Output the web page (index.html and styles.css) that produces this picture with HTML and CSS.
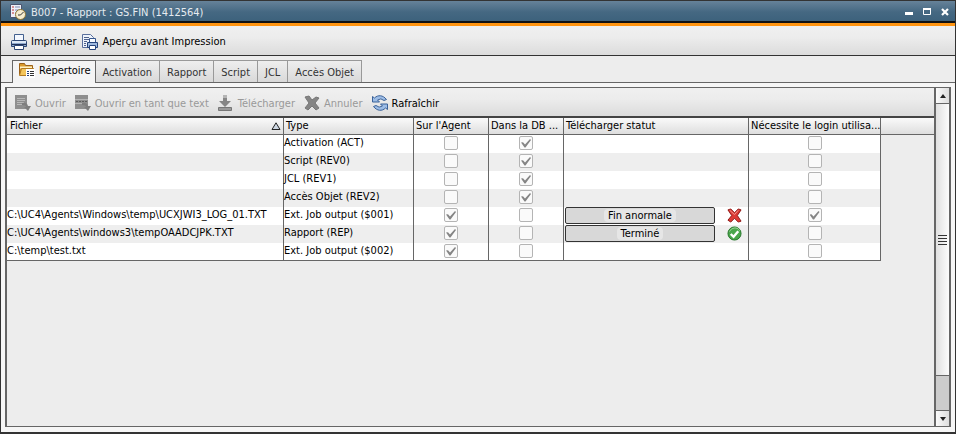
FILE: index.html
```html
<!DOCTYPE html>
<html lang="fr">
  <head>
    <meta charset="UTF-8" />
    <meta name="viewport" content="width=device-width, initial-scale=1.0" />
    <title>B007 - Rapport : GS.FIN (1412564)</title>
    <link rel="stylesheet" href="styles.css">
  </head>
  <body>
    <div class="window">
      <header class="titlebar">
        <svg class="icon" viewBox="0 0 16 16">
          <path d="M.5.5h11v13H.5z" fill="#eef0f8" stroke="#4a5570" />
          <path d="M2 3h2M2 6h2M2 9h2" stroke="#c03030" />
          <path d="M5 3h5M5 6h4M5 9h2" stroke="#7c88b0" />
          <circle cx="10.5" cy="10.5" r="5" fill="#f6edcf" stroke="#8b7434" />
          <path d="M10.5 11l3-3M10.5 11H8" stroke="#333" fill="none" />
        </svg>
        <h1>B007 - Rapport : GS.FIN (1412564)</h1>
        <div class="window-buttons">
          <button aria-label="Réduire"><svg viewBox="0 0 8 8"><path d="M0 4h8v3H0z" fill="#fff" /></svg></button>
          <button aria-label="Agrandir"><svg viewBox="0 0 8 8"><path d="M.5 1v5.5h7V1" fill="none" stroke="#fff" /><path d="M0 0h8v2H0z" fill="#fff" /></svg></button>
          <button aria-label="Fermer"><svg viewBox="0 0 8 8"><path d="M1 1l6 6M7 1L1 7" stroke="#fff" stroke-width="2.2" /></svg></button>
        </div>
      </header>

      <div class="toolbar main-toolbar">
        <button>
          <svg class="icon" viewBox="0 0 16 16">
            <path d="M3.500 7V.5h9V7" fill="#f4f8ff" stroke="#44618f" />
            <path d="M.5 7.500q0-1 1-1h13q1 0 1 1v5H.5z" fill="#8fa9cd" stroke="#2c4674" />
            <path d="M1 8h14" stroke="#dce8f6" stroke-width="2" />
            <path d="M1 10.500h14" stroke="#1f3158" />
            <path d="M3.500 11.500h9v4h-9z" fill="#fff" stroke="#2c4674" />
          </svg>
          Imprimer
        </button>
        <button>
          <svg class="icon" viewBox="0 0 16 16">
            <path d="M.5.5h8l3 3v10H.5z" fill="#eef3fb" stroke="#5a6f9c" />
            <path d="M2 3.500h5M2 5.500h5M2 7.500h3M2 9.500h2M2 11.500h2" stroke="#4f618c" />
            <path d="M7.500 9V4.500h6V9" fill="#f8fbff" stroke="#35558d" />
            <path d="M5.500 8.500h10v5h-10z" fill="#9fb9de" stroke="#25437a" />
            <path d="M7.500 11.500h6v4h-6z" fill="#fff" stroke="#25437a" />
          </svg>
          Aperçu avant Impression
        </button>
      </div>

      <nav class="tabs" role="tablist">
        <button class="tab active" role="tab" aria-selected="true">
          <svg class="icon" viewBox="0 0 16 16">
            <path d="M.5 12.500v-11h5l1 2h7v9z" fill="#d99a2b" stroke="#99601a" />
            <path d="M1 4.500h12v2H1z" fill="#fff3c4" />
            <path d="M.5 13.500l2-7h12l-1 7z" fill="#f3c55c" stroke="#b27a21" />
            <path d="M7 7h9v9H7z" fill="#fff" />
            <path d="M8 9.500h2M8 11.500h2M8 13.500h2" stroke="#263f78" />
            <path d="M11 9.500h4M11 11.500h4M11 13.500h4" stroke="#333" />
          </svg>
          Répertoire
        </button>
        <button class="tab" role="tab">Activation</button>
        <button class="tab" role="tab">Rapport</button>
        <button class="tab" role="tab">Script</button>
        <button class="tab" role="tab">JCL</button>
        <button class="tab" role="tab">Accès Objet</button>
      </nav>

      <main class="pane">
        <div class="panel">
          <div class="content">
            <div class="toolbar file-toolbar">
              <button disabled>
                <svg class="icon" viewBox="0 0 16 16">
                  <path d="M0 0h12v14H0z" fill="#8e8e8e" />
                  <path d="M2 3.500h8M2 5.500h8M2 7.500h7M2 9.500h5" stroke="#b8b8b8" />
                  <path d="M7 8q5-1 6 3h3l-3 5-4-4h2q0-2-4-2z" fill="#7e7e7e" />
                </svg>
                Ouvrir
              </button>
              <button disabled>
                <svg class="icon" viewBox="0 0 16 16">
                  <path d="M0 0h13v14H0z" fill="#8e8e8e" />
                  <path d="M0 4.500h13" stroke="#b4b4b4" />
                  <path d="M1 6.500h11" stroke="#5d5d5d" stroke-dasharray="2 1" />
                  <path d="M0 8.500h9" stroke="#b4b4b4" />
                  <path d="M7 8q5-1 6 3h3l-3 5-4-4h2q0-2-4-2z" fill="#7e7e7e" />
                </svg>
                Ouvrir en tant que text
              </button>
              <button disabled>
                <svg class="icon" viewBox="0 0 16 16">
                  <path d="M5 0h4v6h4l-6 6-6-6h4z" fill="#868686" />
                  <path d="M5 0h4v3H5z" fill="#b5b5b5" />
                  <path d="M.5 12.500h13v3H.5z" fill="#999" stroke="#777" />
                </svg>
                Télécharger
              </button>
              <button disabled>
                <svg class="icon" viewBox="0 0 16 16">
                  <path d="M1 2l4-1 3 4 4-3 3 1-4 5 4 5-3 2-4-4-4 4-3-2 4-5z" fill="#858585" stroke="#777" />
                </svg>
                Annuler
              </button>
              <button>
                <svg class="icon" viewBox="0 0 16 16">
                  <path d="M.5 1.500l2 1.500C6-.5 11 0 14.500 4.500l-2.500 1Q9 2.500 5.500 5l2 2h-7z" fill="#9dbde6" stroke="#3b6299" />
                  <path d="M15.500 14.500l-2-1.500C10 16.500 5 16 1.500 11.500l2.500-1q3 3 6.500.5l-2-2h7z" fill="#9dbde6" stroke="#3b6299" />
                </svg>
                Rafraîchir
              </button>
            </div>

            <table class="files">
              <colgroup>
                <col class="col-file">
                <col class="col-type">
                <col class="col-flag">
                <col class="col-flag">
                <col class="col-status">
                <col class="col-login">
                <col>
              </colgroup>
              <thead>
                <tr>
                  <th>
                    <div class="sorted">
                      Fichier
                      <svg class="sort" viewBox="0 0 10 8"><path d="M5 .8L9 7.500H1z" fill="#ccd6e2" stroke="#222" /></svg>
                    </div>
                  </th>
                  <th>Type</th>
                  <th>Sur l'Agent</th>
                  <th>Dans la DB ...</th>
                  <th>Télécharger statut</th>
                  <th>Nécessite le login utilisa...</th>
                  <th></th>
                </tr>
              </thead>
              <tbody>
                <tr>
                  <td></td>
                  <td>Activation (ACT)</td>
                  <td class="check"><input type="checkbox" aria-label="Sur l'Agent" disabled></td>
                  <td class="check"><input type="checkbox" aria-label="Dans la DB" checked disabled></td>
                  <td></td>
                  <td class="check"><input type="checkbox" aria-label="Nécessite le login" disabled></td>
                  <td class="rest"></td>
                </tr>
                <tr>
                  <td></td>
                  <td>Script (REV0)</td>
                  <td class="check"><input type="checkbox" aria-label="Sur l'Agent" disabled></td>
                  <td class="check"><input type="checkbox" aria-label="Dans la DB" checked disabled></td>
                  <td></td>
                  <td class="check"><input type="checkbox" aria-label="Nécessite le login" disabled></td>
                  <td class="rest"></td>
                </tr>
                <tr>
                  <td></td>
                  <td>JCL (REV1)</td>
                  <td class="check"><input type="checkbox" aria-label="Sur l'Agent" disabled></td>
                  <td class="check"><input type="checkbox" aria-label="Dans la DB" checked disabled></td>
                  <td></td>
                  <td class="check"><input type="checkbox" aria-label="Nécessite le login" disabled></td>
                  <td class="rest"></td>
                </tr>
                <tr>
                  <td></td>
                  <td>Accès Objet (REV2)</td>
                  <td class="check"><input type="checkbox" aria-label="Sur l'Agent" disabled></td>
                  <td class="check"><input type="checkbox" aria-label="Dans la DB" checked disabled></td>
                  <td></td>
                  <td class="check"><input type="checkbox" aria-label="Nécessite le login" disabled></td>
                  <td class="rest"></td>
                </tr>
                <tr>
                  <td>C:\UC4\Agents\Windows\temp\UCXJWI3_LOG_01.TXT</td>
                  <td>Ext. Job output ($001)</td>
                  <td class="check"><input type="checkbox" aria-label="Sur l'Agent" checked disabled></td>
                  <td class="check"><input type="checkbox" aria-label="Dans la DB" disabled></td>
                  <td>
                    <div class="status">
                      <button><span>Fin anormale</span></button>
                      <svg class="state" viewBox="0 0 16 16">
                        <path d="M1 2l3-1 4 4 4-4 3 1-4 6 4 6-3 1-4-4-4 4-3-2 4-5z" fill="#dc3a34" stroke="#8c1513" />
                        <path d="M3 2.500l5 4.500 4-4.500" fill="none" stroke="#f39a92" />
                      </svg>
                    </div>
                  </td>
                  <td class="check"><input type="checkbox" aria-label="Nécessite le login" checked disabled></td>
                  <td class="rest"></td>
                </tr>
                <tr>
                  <td>C:\UC4\Agents\windows3\tempOAADCJPK.TXT</td>
                  <td>Rapport (REP)</td>
                  <td class="check"><input type="checkbox" aria-label="Sur l'Agent" checked disabled></td>
                  <td class="check"><input type="checkbox" aria-label="Dans la DB" disabled></td>
                  <td>
                    <div class="status">
                      <button><span>Terminé</span></button>
                      <svg class="state" viewBox="0 0 16 16">
                        <circle cx="8" cy="8" r="7" fill="#4aa64c" stroke="#26752b" />
                        <path d="M2.500 6q2-4 6-4t5 3" fill="none" stroke="#9bd49a" />
                        <path d="M4 8.500l3 3 5-6" fill="none" stroke="#fff" stroke-width="2.5" />
                      </svg>
                    </div>
                  </td>
                  <td class="check"><input type="checkbox" aria-label="Nécessite le login" disabled></td>
                  <td class="rest"></td>
                </tr>
                <tr>
                  <td>C:\temp\test.txt</td>
                  <td>Ext. Job output ($002)</td>
                  <td class="check"><input type="checkbox" aria-label="Sur l'Agent" checked disabled></td>
                  <td class="check"><input type="checkbox" aria-label="Dans la DB" disabled></td>
                  <td></td>
                  <td class="check"><input type="checkbox" aria-label="Nécessite le login" disabled></td>
                  <td class="rest"></td>
                </tr>
              </tbody>
            </table>
          </div>

          <div class="scrollbar">
            <button class="arrow" aria-label="Monter"><svg viewBox="0 0 6 4"><path d="M3 0l3 4H0z" fill="#222" /></svg></button>
            <div class="thumb"><span class="grip"></span></div>
            <div class="track"></div>
            <button class="arrow" aria-label="Descendre"><svg viewBox="0 0 6 4"><path d="M0 0h6L3 4z" fill="#222" /></svg></button>
          </div>
        </div>
      </main>
    </div>
  </body>
</html>
```
FILE: styles.css
```css
* {
  box-sizing: border-box;
}
body {
  margin: 0;
  font-family: "DejaVu Sans Condensed", "DejaVu Sans", Tahoma, sans-serif;
  font-size: 11px;
  color: #000;
}
button {
  margin: 0;
  padding: 0;
  border: none;
  background: none;
  font: inherit;
  color: inherit;
}
.window {
  display: flex;
  flex-direction: column;
  height: 100vh;
  border: 1px solid #333;
  border-bottom-width: 2px;
  background-color: #ededed;
}
.icon {
  width: 16px;
  height: 16px;
  flex: none;
}

/* title bar */
.titlebar {
  display: flex;
  align-items: center;
  gap: 5px;
  height: 25px;
  padding: 0 6px 0 9px;
  background: linear-gradient(#668299, #456882 50%, #3b607b);
  border-bottom: 3px solid #ff9410;
  box-shadow: inset 0 -2px #111;
  color: #e6ebf0;
}
.titlebar h1 {
  flex: 1;
  margin: 0;
  font-size: 11px;
  font-weight: normal;
}
.window-buttons {
  display: flex;
  gap: 10px;
}
.window-buttons svg {
  display: block;
  width: 8px;
  height: 8px;
}

/* toolbars */
.toolbar {
  display: flex;
  align-items: center;
  height: 30px;
  background: linear-gradient(#f0f0f0, #ececec 40%, #dcdcdc);
  border-bottom: 1px solid #333;
}
.toolbar button {
  display: flex;
  align-items: center;
  gap: 4px;
}
.toolbar button:disabled {
  color: #999;
}
.main-toolbar {
  gap: 6px;
  padding: 2px 10px 0;
}
.file-toolbar {
  gap: 9px;
  padding: 2px 8px 0;
  border-bottom: 2px solid #444;
}

/* tabs */
.tabs {
  display: flex;
  height: 27px;
  padding: 4px 11px 0;
  border-bottom: 1px solid #666;
}
.tab {
  padding: 2px 7px 0;
  border: 1px solid #999;
  border-left: none;
  border-bottom: none;
  background: linear-gradient(#eee, #d9d9d9);
  color: #333;
}
.tab.active {
  display: flex;
  align-items: center;
  gap: 4px;
  margin-bottom: -1px;
  padding: 0 4px 4px 6px;
  border: 1px solid #666;
  border-bottom: none;
  background: #f4f4f4;
  color: #000;
}

.pane {
  flex: 1;
  display: flex;
  min-height: 0;
  padding: 4px 4px 5px;
  background-color: #f6f6f6;
}
.panel {
  flex: 1;
  display: flex;
  border: 1px solid #666;
  border-left-width: 2px;
  border-right-width: 2px;
}
.content {
  flex: 1;
  background-color: #ededed;
}

/* file list */
.files {
  width: 100%;
  table-layout: fixed;
  border-collapse: separate;
  border-spacing: 0;
}
.col-file {
  width: 277px;
}
.col-type {
  width: 130px;
}
.col-flag {
  width: 75px;
}
.col-status {
  width: 185px;
}
.col-login {
  width: 132px;
}
th {
  height: 17px;
  padding: 0 0 0 2px;
  border-right: 1px solid #666;
  border-bottom: 1px solid #666;
  background: linear-gradient(#fafafa, #dedede);
  font-weight: normal;
  line-height: 16px;
  text-align: left;
  white-space: nowrap;
}
th:last-child {
  border-right: none;
}
.sorted {
  display: flex;
  justify-content: space-between;
  align-items: center;
  padding: 0 2px 0 1px;
}
.sort {
  width: 10px;
  height: 8px;
}
td {
  height: 18px;
  padding: 0;
  border-right: 1px solid #666;
  background-color: #fff;
  line-height: 16px;
  vertical-align: top;
  white-space: nowrap;
}
tr:nth-child(even) td {
  background-color: #eee;
}
tr:last-child td {
  border-bottom: 1px solid #666;
}
tbody tr td.rest {
  border: none;
  background-color: transparent;
}
.check {
  padding-top: 1px;
}
input[type="checkbox"] {
  appearance: none;
  display: block;
  width: 14px;
  height: 14px;
  margin: 0 auto;
  border: 1px solid #b4b4b4;
  border-radius: 2px;
  background-color: #fafafa;
}
input[type="checkbox"]:checked::before {
  content: "";
  display: block;
  width: 10px;
  height: 9px;
  margin: 2px 1px;
  background-color: #858585;
  clip-path: polygon(0 40%, 20% 35%, 40% 60%, 90% 0, 100% 10%, 45% 95%, 35% 95%);
}
.status {
  display: flex;
  align-items: center;
  gap: 12px;
  padding-left: 1px;
}
.status button {
  width: 150px;
  height: 17px;
  border: 1px solid #333;
  border-radius: 2px;
  background-color: #d8d8d8;
  line-height: 15px;
}
.status button span {
  padding: 0 4px;
  border-radius: 4px;
  background-color: #e6e6e6;
}
.state {
  width: 15px;
  height: 15px;
}

/* scrollbar */
.scrollbar {
  display: flex;
  flex-direction: column;
  width: 15px;
  border-left: 2px solid #666;
}
.arrow {
  display: flex;
  align-items: center;
  justify-content: center;
  height: 15px;
  background: linear-gradient(to right, #fafafa, #ddd);
}
.arrow svg {
  width: 6px;
  height: 4px;
}
.thumb {
  flex: 8;
  display: flex;
  align-items: center;
  justify-content: center;
  border-top: 1px solid #666;
  border-bottom: 1px solid #666;
  background: linear-gradient(to right, #e0e0e0, #fcfcfc);
}
.grip {
  width: 9px;
  height: 10px;
  background: repeating-linear-gradient(#333 0 1px, transparent 1px 3px);
}
.track {
  flex: 1;
  border-bottom: 1px solid #666;
  background-color: #ccc;
}
```
